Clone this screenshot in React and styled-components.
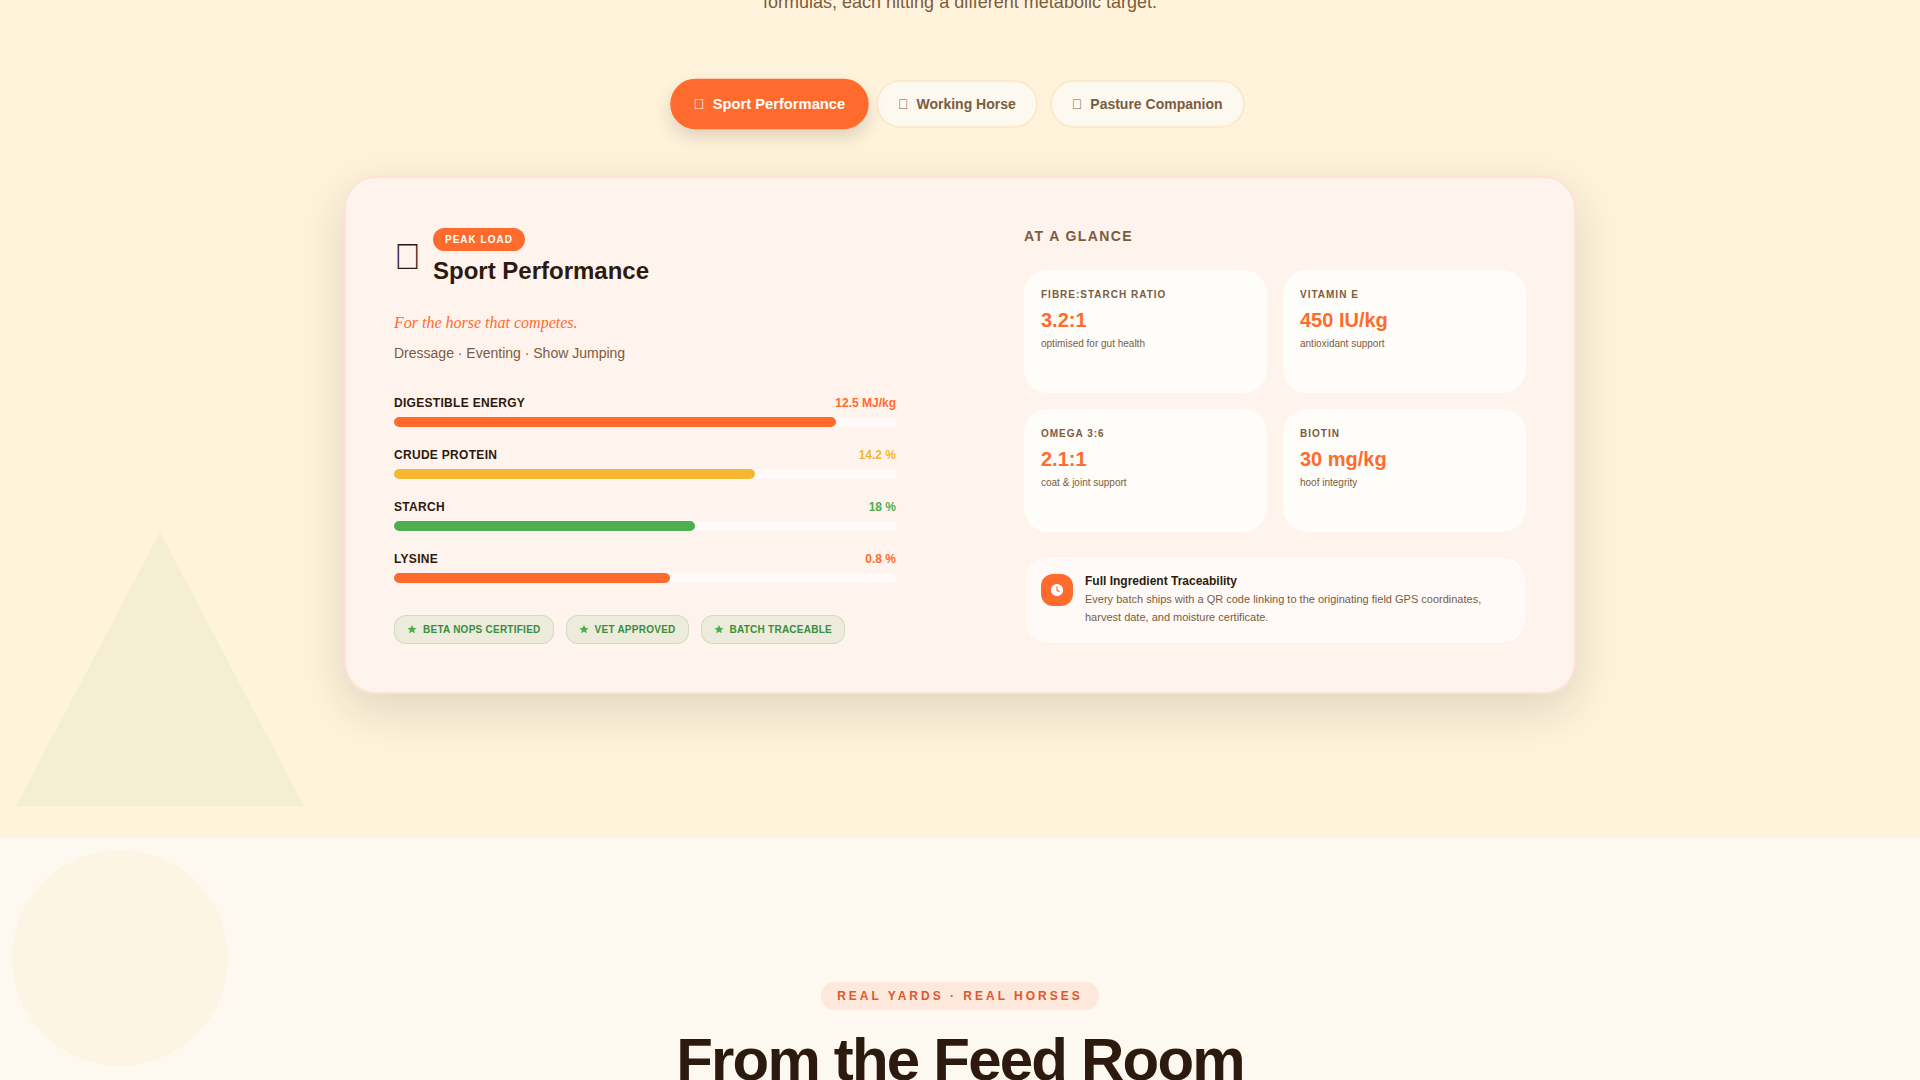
import React, { useState } from 'react';
import styled, { createGlobalStyle } from 'styled-components';

const colors = {
  wheat: '#fff3dc',
  cream: '#fef9f0',
  ink: '#2c1a0e',
  muted: '#7a5c3e',
  orange: '#ff6b2c',
  amber: '#f5b731',
  green: '#4caf50',
  greenDark: '#388e3c',
  rust: '#e0562d',
};

const GlobalStyle = createGlobalStyle`
  *, *::before, *::after {
    box-sizing: border-box;
  }

  body {
    margin: 0;
    background: ${colors.cream};
    color: ${colors.ink};
    font-family: 'Liberation Sans', Arial, sans-serif;
    overflow: hidden;
  }

  h2, h3, h4, p, dl, dd, ul {
    margin: 0;
    padding: 0;
  }
`;

const Section = styled.section`
  position: relative;
  overflow: hidden;
  background: ${({ $bg }) => $bg};
`;

const Formulas = styled(Section)`
  padding-bottom: 144px;
`;

const Stories = styled(Section)`
  display: flex;
  flex-direction: column;
  align-items: center;
  gap: 17px;
  padding: 144px 24px 0;
`;

const Triangle = styled.svg`
  position: absolute;
  left: 0;
  bottom: 0;
  width: 320px;
  height: 320px;
`;

const Circle = styled.div`
  position: absolute;
  left: 12px;
  top: 12px;
  width: 216px;
  height: 216px;
  border-radius: 50%;
  background: #fcf5e4;
`;

const Container = styled.div`
  position: relative;
  max-width: 1280px;
  margin: 0 auto;
  padding: 0 24px;
`;

const Intro = styled.p`
  margin-top: -12px;
  font-size: 18px;
  line-height: 28px;
  text-align: center;
  color: ${colors.muted};
`;

const Tabs = styled.div`
  display: flex;
  justify-content: center;
  gap: 12px;
  margin: 64px 0 48px;
`;

const Tab = styled.button`
  display: flex;
  align-items: center;
  gap: 8px;
  height: 48px;
  padding: 0 20px;
  border: 2px solid ${({ $active }) => ($active ? colors.orange : '#fcebcb')};
  border-radius: 24px;
  background: ${({ $active }) => ($active ? colors.orange : colors.cream)};
  color: ${({ $active }) => ($active ? '#fff' : colors.muted)};
  box-shadow: ${({ $active }) => ($active ? '0 8px 16px rgba(44, 26, 14, 0.15)' : 'none')};
  transform: ${({ $active }) => ($active ? 'scale(1.05)' : 'none')};
  font-family: inherit;
  font-size: 14px;
  font-weight: 700;
  cursor: pointer;
`;

const TabIcon = styled.span`
  font-size: 14px;
  font-weight: 400;
`;

const Card = styled.article`
  display: grid;
  grid-template-columns: 1fr 1fr;
  gap: 128px;
  padding: 48px;
  border: 2px solid #ffe2d5;
  border-radius: 32px;
  background: #fff3ed;
  box-shadow: 0 16px 48px rgba(44, 26, 14, 0.14);
`;

const Column = styled.div`
  display: flex;
  flex-direction: column;
`;

const Head = styled.header`
  display: flex;
  align-items: center;
  gap: 12px;
  margin-bottom: 22px;
`;

const HeadIcon = styled.span`
  font-size: 36px;
  line-height: 62px;
`;

const LoadBadge = styled.span`
  display: inline-block;
  padding: 4px 12px;
  border-radius: 12px;
  background: ${colors.orange};
  color: #fff;
  font-size: 10px;
  font-weight: 700;
  line-height: 15px;
  letter-spacing: 1px;
  text-transform: uppercase;
`;

const Title = styled.h3`
  margin-top: 5px;
  font-size: 24px;
  line-height: 30px;
`;

const Tagline = styled.p`
  font-family: 'Liberation Serif', 'Times New Roman', serif;
  font-size: 16px;
  font-style: italic;
  line-height: 26px;
  color: ${colors.orange};
`;

const Disciplines = styled.p`
  margin: 5px 0 28px;
  font-size: 14px;
  line-height: 24px;
  color: ${colors.muted};
`;

const Nutrients = styled.div`
  display: flex;
  flex-direction: column;
  gap: 18px;
`;

const NutrientRow = styled.div`
  display: flex;
  justify-content: space-between;
  margin-bottom: 4px;
  font-size: 12px;
  font-weight: 700;
  line-height: 20px;
`;

const NutrientName = styled.span`
  letter-spacing: 0.025em;
  text-transform: uppercase;
`;

const NutrientValue = styled.span`
  color: ${({ $color }) => $color};
`;

const Track = styled.div`
  height: 10px;
  background: rgba(255, 255, 255, 0.6);
`;

const Fill = styled.div`
  height: 100%;
  border-radius: 5px;
  background: ${({ $color }) => $color};
`;

const Chips = styled.ul`
  display: flex;
  flex-wrap: wrap;
  gap: 12px;
  margin-top: 32px;
  list-style: none;
`;

const Chip = styled.li`
  display: flex;
  align-items: center;
  gap: 6px;
  padding: 6px 12px;
  border: 1px solid rgba(76, 175, 80, 0.22);
  border-radius: 12px;
  background: rgba(76, 175, 80, 0.1);
  color: ${colors.greenDark};
  font-size: 10px;
  font-weight: 700;
  line-height: 15px;
  letter-spacing: 0.025em;
  text-transform: uppercase;
`;

const GlanceTitle = styled.h4`
  margin-bottom: 24px;
  font-size: 14px;
  line-height: 20px;
  letter-spacing: 0.1em;
  text-transform: uppercase;
  color: ${colors.muted};
`;

const Stats = styled.dl`
  display: grid;
  grid-template-columns: 1fr 1fr;
  grid-auto-rows: 1fr;
  flex: 1;
  gap: 16px;
`;

const Stat = styled.div`
  padding: 17px;
  border-radius: 24px;
  background: #fffdf9;
`;

const StatLabel = styled.dt`
  font-size: 10px;
  font-weight: 700;
  line-height: 15px;
  letter-spacing: 1px;
  text-transform: uppercase;
  color: ${colors.muted};
`;

const StatValue = styled.dd`
  margin: 4px 0;
  font-size: 20px;
  font-weight: 700;
  line-height: 28px;
  color: ${colors.orange};
`;

const StatNote = styled.dd`
  font-size: 10px;
  line-height: 12px;
  color: ${colors.muted};
`;

const Trace = styled.div`
  display: flex;
  align-items: flex-start;
  gap: 12px;
  margin-top: 24px;
  padding: 17px 16px;
  border: 1px solid #fff1e3;
  border-radius: 24px;
  background: #fffaf7;
`;

const TraceIcon = styled.span`
  display: flex;
  align-items: center;
  justify-content: center;
  flex: none;
  width: 32px;
  height: 32px;
  border-radius: 12px;
  background: ${colors.orange};
`;

const TraceTitle = styled.h4`
  font-size: 12px;
  line-height: 14px;
`;

const TraceText = styled.p`
  margin-top: 2px;
  font-size: 11px;
  line-height: 18px;
  color: ${colors.muted};
`;

const Eyebrow = styled.p`
  padding: 5px 16px;
  border-radius: 14px;
  background: #fee8dc;
  color: ${colors.rust};
  font-size: 12px;
  font-weight: 700;
  line-height: 18px;
  letter-spacing: 3px;
  text-transform: uppercase;
`;

const Heading = styled.h2`
  font-size: 60px;
  line-height: 66px;
  letter-spacing: -0.03em;
  text-align: center;
`;

const tabs = [
  { id: 'sport', icon: '\uE000', label: 'Sport Performance' },
  { id: 'working', icon: '\uE001', label: 'Working Horse' },
  { id: 'pasture', icon: '\uE002', label: 'Pasture Companion' },
];

const nutrients = [
  { name: 'Digestible Energy', value: '12.5 MJ/kg', percent: 88, color: colors.orange },
  { name: 'Crude Protein', value: '14.2 %', percent: 72, color: colors.amber },
  { name: 'Starch', value: '18 %', percent: 60, color: colors.green },
  { name: 'Lysine', value: '0.8 %', percent: 55, color: colors.orange },
];

const chips = ['Beta NOPS Certified', 'Vet Approved', 'Batch Traceable'];

const stats = [
  { label: 'Fibre:Starch Ratio', value: '3.2:1', note: 'optimised for gut health' },
  { label: 'Vitamin E', value: '450 IU/kg', note: 'antioxidant support' },
  { label: 'Omega 3:6', value: '2.1:1', note: 'coat & joint support' },
  { label: 'Biotin', value: '30 mg/kg', note: 'hoof integrity' },
];

const StarIcon = () => (
  <svg width="10" height="10" viewBox="0 0 24 24" fill={colors.green} aria-hidden="true">
    <path d="M12 0l3.200 6.600 7.300 1-5.300 5 1.400 7.200L12 16.400l-6.600 3.400 1.400-7.200-5.300-5 7.300-1z" />
  </svg>
);

const ClockIcon = () => (
  <svg width="14" height="14" viewBox="0 0 24 24" aria-hidden="true">
    <circle cx="12" cy="12" r="10.500" fill="#fff" />
    <path d="M12 6v6.500l4.500 2.500" fill="none" stroke={colors.orange} strokeWidth="2" />
  </svg>
);

const App = () => {
  const [active, setActive] = useState('sport');

  return (
    <main>
      <GlobalStyle />

      <Formulas $bg={colors.wheat}>
        <Triangle viewBox="0 0 320 320" aria-hidden="true">
          <path d="M160 14L304 288H16z" fill={colors.green} opacity="0.06" />
        </Triangle>
        <Container>
          <Intro>formulas, each hitting a different metabolic target.</Intro>

          <Tabs role="tablist">
            {tabs.map((tab) => (
              <Tab
                key={tab.id}
                type="button"
                role="tab"
                aria-selected={active === tab.id}
                $active={active === tab.id}
                onClick={() => setActive(tab.id)}
              >
                <TabIcon aria-hidden="true">{tab.icon}</TabIcon>
                {tab.label}
              </Tab>
            ))}
          </Tabs>

          <Card>
            <Column>
              <Head>
                <HeadIcon aria-hidden="true">{'\uE000'}</HeadIcon>
                <div>
                  <LoadBadge>Peak Load</LoadBadge>
                  <Title>Sport Performance</Title>
                </div>
              </Head>
              <Tagline>For the horse that competes.</Tagline>
              <Disciplines>Dressage · Eventing · Show Jumping</Disciplines>

              <Nutrients>
                {nutrients.map((item) => (
                  <div key={item.name}>
                    <NutrientRow>
                      <NutrientName>{item.name}</NutrientName>
                      <NutrientValue $color={item.color}>{item.value}</NutrientValue>
                    </NutrientRow>
                    <Track>
                      <Fill $color={item.color} style={{ width: `${item.percent}%` }} />
                    </Track>
                  </div>
                ))}
              </Nutrients>

              <Chips>
                {chips.map((chip) => (
                  <Chip key={chip}>
                    <StarIcon />
                    {chip}
                  </Chip>
                ))}
              </Chips>
            </Column>

            <Column>
              <GlanceTitle>At a Glance</GlanceTitle>
              <Stats>
                {stats.map((stat) => (
                  <Stat key={stat.label}>
                    <StatLabel>{stat.label}</StatLabel>
                    <StatValue>{stat.value}</StatValue>
                    <StatNote>{stat.note}</StatNote>
                  </Stat>
                ))}
              </Stats>
              <Trace>
                <TraceIcon>
                  <ClockIcon />
                </TraceIcon>
                <div>
                  <TraceTitle>Full Ingredient Traceability</TraceTitle>
                  <TraceText>
                    Every batch ships with a QR code linking to the originating field GPS coordinates,
                    harvest date, and moisture certificate.
                  </TraceText>
                </div>
              </Trace>
            </Column>
          </Card>
        </Container>
      </Formulas>

      <Stories $bg={colors.cream}>
        <Circle />
        <Eyebrow>Real Yards · Real Horses</Eyebrow>
        <Heading>From the Feed Room</Heading>
      </Stories>
    </main>
  );
};

export default App;
